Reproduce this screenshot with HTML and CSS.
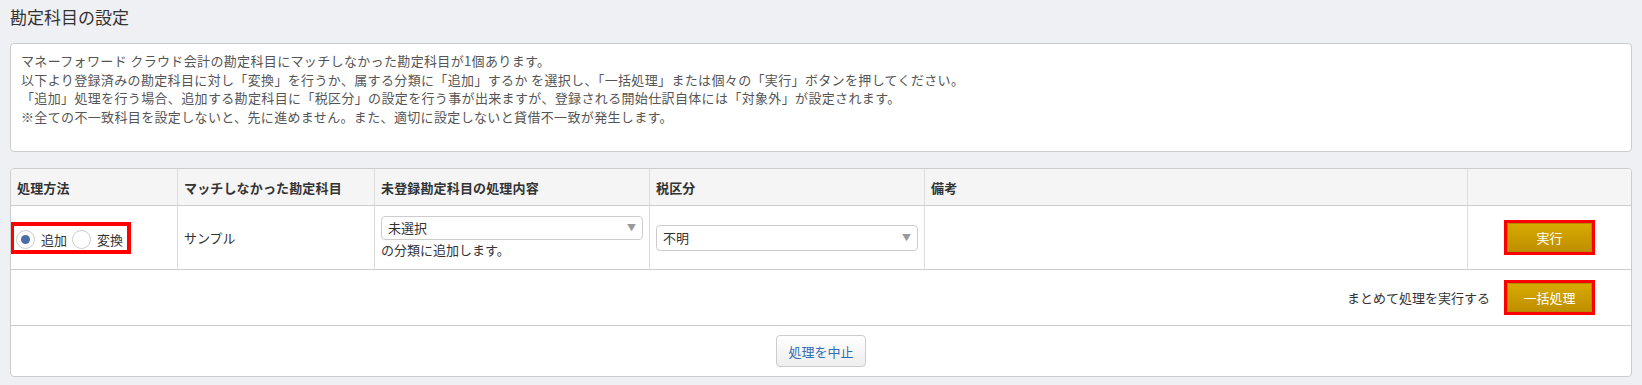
FILE: index.html
```html
<!DOCTYPE html>
<html lang="ja">
<head>
  <meta charset="UTF-8" />
  <title>勘定科目の設定</title>
  <link rel="stylesheet" href="styles.css">
</head>
<body>
  <div class="page">
    <h1>勘定科目の設定</h1>

    <div class="info-box">
      <p>マネーフォワード クラウド会計の勘定科目にマッチしなかった勘定科目が1個あります。</p>
      <p>以下より登録済みの勘定科目に対し「変換」を行うか、属する分類に「追加」するか を選択し、「一括処理」または個々の「実行」ボタンを押してください。</p>
      <p>「追加」処理を行う場合、追加する勘定科目に「税区分」の設定を行う事が出来ますが、登録される開始仕訳自体には「対象外」が設定されます。</p>
      <p>※全ての不一致科目を設定しないと、先に進めません。また、適切に設定しないと貸借不一致が発生します。</p>
    </div>

    <div class="panel">
      <table class="match-table">
        <colgroup>
          <col style="width: 166px">
          <col style="width: 197px">
          <col style="width: 275px">
          <col style="width: 275px">
          <col style="width: 543px">
          <col>
        </colgroup>
        <thead>
          <tr>
            <th>処理方法</th>
            <th>マッチしなかった勘定科目</th>
            <th>未登録勘定科目の処理内容</th>
            <th>税区分</th>
            <th>備考</th>
            <th></th>
          </tr>
        </thead>
        <tbody>
          <tr class="row-item">
            <td class="cell-method">
              <div class="radio-group">
                <label class="radio checked"><span class="radio-dot"></span>追加</label>
                <label class="radio"><span class="radio-dot"></span>変換</label>
              </div>
            </td>
            <td>サンプル</td>
            <td>
              <div class="select select-short">未選択<span class="caret">▼</span></div>
              <div class="hint">の分類に追加します。</div>
            </td>
            <td>
              <div class="select">不明<span class="caret">▼</span></div>
            </td>
            <td></td>
            <td class="cell-action">
              <button class="btn-gold marked">実行</button>
            </td>
          </tr>
          <tr class="row-bulk">
            <td colspan="6">
              <span class="bulk-label">まとめて処理を実行する</span>
              <button class="btn-gold marked">一括処理</button>
            </td>
          </tr>
          <tr class="row-cancel">
            <td colspan="6">
              <button class="btn-plain">処理を中止</button>
            </td>
          </tr>
        </tbody>
      </table>
    </div>
  </div>
</body>
</html>
```

FILE: styles.css
```css
* {
  box-sizing: border-box;
}

body {
  margin: 0;
  background-color: #eff0f4;
  font-family: "Noto Sans CJK JP", "Noto Sans", sans-serif;
  font-size: 13px;
  color: #333;
}

.page {
  padding: 5px 10px;
}

h1 {
  font-size: 17px;
  font-weight: normal;
  line-height: 24px;
  margin: 0 0 14px;
  color: #333;
}

/* Notice box */
.info-box {
  background: #fff;
  border: 1px solid #ccc;
  border-radius: 4px;
  padding: 8px 10px 25px;
  color: #555;
  line-height: 18.6px;
  letter-spacing: 0.35px;
  margin-bottom: 16px;
}
.info-box p {
  margin: 0;
}

/* Table panel */
.panel {
  background: #fff;
  border: 1px solid #ccc;
  border-radius: 4px;
  overflow: hidden;
}

.match-table {
  width: 100%;
  table-layout: fixed;
  border-collapse: separate;
  border-spacing: 0;
}

.match-table th,
.match-table td {
  padding: 0 6px;
  border-bottom: 1px solid #ccc;
  vertical-align: middle;
  text-align: left;
}
.match-table th + th,
.row-item td + td {
  border-left: 1px solid #ddd;
}

.match-table th {
  height: 37px;
  background: #f5f5f5;
  font-weight: bold;
  letter-spacing: 0.15px;
}

.row-item td {
  height: 64px;
}

.cell-method {
  padding-left: 0 !important;
}

.radio-group {
  display: inline-flex;
  align-items: center;
  gap: 5px;
  border: 4px solid #f00;
  padding: 4px 4px 1px 2px;
  margin-left: -1px;
}
.radio {
  display: inline-flex;
  align-items: center;
  gap: 6px;
}
.radio-dot {
  width: 19px;
  height: 19px;
  border-radius: 50%;
  border: 1px solid #ccc;
  background: #fff;
  position: relative;
}
.radio.checked .radio-dot:after {
  content: "";
  position: absolute;
  left: 4px;
  top: 4px;
  width: 9px;
  height: 9px;
  border-radius: 50%;
  background: #4a6fa8;
}

.select {
  position: relative;
  height: 26px;
  line-height: 24px;
  border: 1px solid #ccc;
  border-radius: 4px;
  padding: 0 6px;
  background: #fff;
}
.select-short {
  height: 24px;
  line-height: 22px;
}
.caret {
  position: absolute;
  right: 6px;
  top: 0;
  font-size: 9px;
  color: #999;
}
.hint {
  line-height: 19px;
}

.cell-action {
  text-align: center !important;
}

.btn-gold {
  width: 85px;
  height: 29px;
  border: 1px solid #b68a00;
  border-radius: 0;
  background: linear-gradient(#d6aa00, #bf8f00);
  color: #fff;
  font-family: inherit;
  font-size: 13px;
}
.marked {
  outline: 3px solid #f00;
}

.row-bulk td {
  height: 56px;
  text-align: right !important;
  padding-right: 39px;
}
.bulk-label {
  margin-right: 14px;
}

.row-cancel td {
  height: 50px;
  text-align: center !important;
  border-bottom: none;
}

.btn-plain {
  height: 32px;
  padding: 0 11px;
  border: 1px solid #ccc;
  border-radius: 4px;
  background: linear-gradient(#fff, #eee);
  color: #2f6db5;
  font-family: inherit;
  font-size: 13px;
}
```
